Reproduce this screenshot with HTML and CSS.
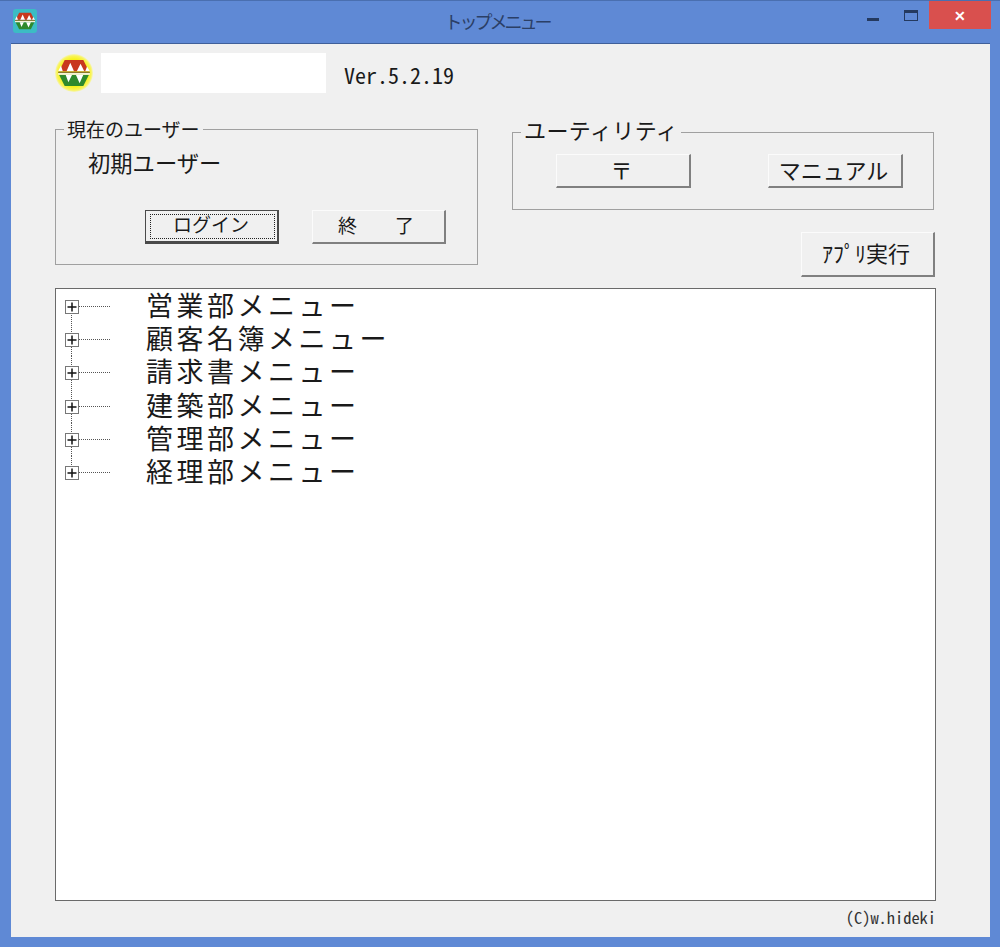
FILE: index.html
```html
<!DOCTYPE html>
<html lang="ja">
<head>
<meta charset="utf-8">
<title>トップメニュー</title>
<link rel="stylesheet" href="styles.css">
</head>
<body>
<svg class="defs" width="0" height="0" aria-hidden="true">
  <defs>
    <radialGradient id="halo">
      <stop offset="0.72" stop-color="#f7f21a"/>
      <stop offset="0.9" stop-color="#f9f45a"/>
      <stop offset="1" stop-color="#f4f4c0"/>
    </radialGradient>
    <symbol id="mark" viewBox="0 0 34 30">
      <path d="M7 1 H27 L33 13 H1 Z" fill="#c8381e"/>
      <path d="M1 17 H33 L27 29 H7 Z" fill="#2f8a2c"/>
      <path d="M9 13 L13 4 L17 13 Z M20 13 L24 5 L28 13 Z M0 13 L3 7 L5 13 Z M29 13 L31 8 L34 13 Z" fill="#fff"/>
      <path d="M8 17 L11 25 L15 17 Z M19 17 L23 26 L27 17 Z" fill="#fff"/>
      <rect x="0" y="13.5" width="34" height="1.5" fill="#8c7a28"/>
      <rect x="0" y="15" width="34" height="2" fill="#f4f2d8"/>
    </symbol>
  </defs>
</svg>
<div class="window">
  <header class="titlebar">
    <div class="app-icon">
      <svg width="20" height="18"><use href="#mark"/></svg>
    </div>
    <div class="title">トップメニュー</div>
    <div class="controls">
      <span class="ctl-min"></span>
      <span class="ctl-max"></span>
      <span class="ctl-close">✕</span>
    </div>
  </header>
  <main class="client">
    <div class="top">
      <svg class="logo" width="38" height="40" viewBox="0 0 38 40">
        <circle cx="19" cy="20" r="19" fill="url(#halo)"/>
        <use href="#mark" x="3" y="6" width="32" height="28"/>
      </svg>
      <div class="namebox"></div>
      <div class="version">Ver.5.2.19</div>
    </div>
    <div class="panels">
      <section class="group group-user">
        <div class="group-title title-user">現在のユーザー</div>
        <div class="user-name">初期ユーザー</div>
        <div class="user-actions">
          <button class="btn btn-small btn-focus"><span class="focus-ring">ログイン</span></button>
          <button class="btn btn-small btn-quit">終　　了</button>
        </div>
      </section>
      <div class="right-col">
        <section class="group group-util">
          <div class="group-title title-util">ユーティリティ</div>
          <div class="util-actions">
            <button class="btn">〒</button>
            <button class="btn">マニュアル</button>
          </div>
        </section>
        <button class="btn btn-run">ｱﾌﾟﾘ実行</button>
      </div>
    </div>
    <div class="tree">
      <div class="row">
        <svg class="node" width="81" height="33"><path class="dots" d="M14 16.5H45M6.5 23V33"/><rect class="box" x="0.5" y="10.5" width="13" height="13"/><path class="plus" d="M2.5 17H11.5M7 12.5V21.5"/></svg>
        <span class="label">営業部メニュー</span>
      </div>
      <div class="row">
        <svg class="node" width="81" height="33"><path class="dots" d="M14 16.5H45M6.5 0V10M6.5 24V33"/><rect class="box" x="0.5" y="10.5" width="13" height="13"/><path class="plus" d="M2.5 17H11.5M7 12.5V21.5"/></svg>
        <span class="label">顧客名簿メニュー</span>
      </div>
      <div class="row">
        <svg class="node" width="81" height="33"><path class="dots" d="M14 16.5H45M6.5 0V10M6.5 24V33"/><rect class="box" x="0.5" y="10.5" width="13" height="13"/><path class="plus" d="M2.5 17H11.5M7 12.5V21.5"/></svg>
        <span class="label">請求書メニュー</span>
      </div>
      <div class="row">
        <svg class="node" width="81" height="33"><path class="dots" d="M14 16.5H45M6.5 0V10M6.5 24V33"/><rect class="box" x="0.5" y="10.5" width="13" height="13"/><path class="plus" d="M2.5 17H11.5M7 12.5V21.5"/></svg>
        <span class="label">建築部メニュー</span>
      </div>
      <div class="row">
        <svg class="node" width="81" height="33"><path class="dots" d="M14 16.5H45M6.5 0V10M6.5 24V33"/><rect class="box" x="0.5" y="10.5" width="13" height="13"/><path class="plus" d="M2.5 17H11.5M7 12.5V21.5"/></svg>
        <span class="label">管理部メニュー</span>
      </div>
      <div class="row">
        <svg class="node" width="81" height="33"><path class="dots" d="M14 16.5H45M6.5 0V10"/><rect class="box" x="0.5" y="10.5" width="13" height="13"/><path class="plus" d="M2.5 17H11.5M7 12.5V21.5"/></svg>
        <span class="label">経理部メニュー</span>
      </div>
    </div>
    <footer class="copyright">(C)w.hideki</footer>
  </main>
</div>
</body>
</html>
```

FILE: styles.css
```css
* {
  box-sizing: border-box;
}

html,
body {
  margin: 0;
  height: 100%;
}

body {
  font-family: "Noto Sans CJK JP", "Liberation Sans", sans-serif;
  color: #1a1a1a;
  overflow: hidden;
}

.defs {
  display: block;
  height: 0;
}

.window {
  width: 1000px;
  height: 947px;
  display: flex;
  flex-direction: column;
  background: #5f89d5;
  border-top: 1px solid #4a6fb0;
  padding: 0 10px 10px 11px;
}

.titlebar {
  height: 42px;
  flex: none;
  display: grid;
  grid-template-columns: 1fr auto 1fr;
  align-items: start;
}

.app-icon {
  width: 24px;
  height: 24px;
  margin: 8px 0 0 2px;
  background: #3cbcc4;
  border-radius: 3px;
  display: flex;
  align-items: center;
  justify-content: center;
}

.title {
  font-size: 18px;
  line-height: 24px;
  letter-spacing: -3px;
  color: #2b3f66;
  margin-top: 8px;
  padding-right: 7px;
}

.controls {
  display: flex;
  justify-content: flex-end;
  align-items: flex-start;
  margin-right: -1px;
}

.ctl-min {
  width: 12px;
  height: 3px;
  margin: 17px 25px 0 0;
  background: #24395f;
}

.ctl-max {
  width: 14px;
  height: 11px;
  margin: 9px 11px 0 0;
  border: 1px solid #24395f;
  border-top-width: 3px;
}

.ctl-close {
  width: 62px;
  height: 28px;
  background: #d9504e;
  color: #fff;
  font-size: 14px;
  line-height: 28px;
  font-weight: 700;
  text-align: center;
}

.client {
  flex: 1;
  min-height: 0;
  display: flex;
  flex-direction: column;
  background: #f0f0f0;
  border-top: 1px solid #3f5f99;
  padding: 9px 54px 0 44px;
}

.top {
  display: flex;
  align-items: flex-start;
  height: 40px;
}

.logo {
  flex: none;
  margin-right: 8px;
}

.namebox {
  width: 225px;
  height: 40px;
  background: #fff;
}

.version {
  font-size: 22px;
  line-height: 28px;
  font-feature-settings: "hwid";
  margin: 7px 0 0 18px;
}

.panels {
  display: grid;
  grid-template-columns: 423px 424px;
  column-gap: 34px;
  margin-top: 36px;
}

.group {
  position: relative;
  border: 1px solid #a0a0a0;
}

.group-title {
  position: absolute;
  background: #f0f0f0;
  white-space: nowrap;
  padding: 0 3px;
}

.title-user {
  top: -13px;
  left: 8px;
  font-size: 19px;
  line-height: 24px;
}

.title-util {
  top: -17px;
  left: 8px;
  font-size: 22px;
  letter-spacing: 0.4px;
  line-height: 26px;
}

.group-user {
  height: 136px;
  padding: 19px 0 0 32px;
}

.user-name {
  font-size: 22.3px;
  line-height: 26px;
}

.user-actions {
  display: flex;
  gap: 33px;
  margin: 35px 0 0 57px;
}

.right-col {
  display: flex;
  flex-direction: column;
  align-items: flex-end;
  padding-top: 3px;
}

.group-util {
  width: 422px;
  height: 78px;
  align-self: flex-start;
  padding: 21px 0 0 43px;
}

.util-actions {
  display: flex;
  gap: 77px;
}

.btn {
  width: 135px;
  height: 34px;
  padding: 0 3px 4px 0;
  font: inherit;
  font-size: 22px;
  line-height: 28px;
  color: #1a1a1a;
  background: #f0f0f0;
  border: 0;
  border-top: 1px solid #fbfbfb;
  border-left: 1px solid #fbfbfb;
  border-right: 2px solid #808080;
  border-bottom: 2px solid #808080;
}

.btn-small {
  font-size: 19px;
  width: 134px;
}

.btn-quit {
  padding-right: 5px;
}

.btn-focus {
  border: 1px solid #4a4a4a;
  border-right-width: 2px;
  border-bottom-width: 3px;
  padding: 3px 2px 2px 4px;
}

.focus-ring {
  display: block;
  height: 100%;
  line-height: 18px;
  padding-right: 3px;
  border: 1px dotted #222;
}

.btn-run {
  width: 134px;
  height: 45px;
  margin-top: 22px;
  margin-right: 1px;
}

.tree {
  height: 613px;
  flex: none;
  margin-top: 11px;
  background: #fff;
  border: 1px solid #6a6a6a;
  padding: 1px 0 0 9px;
}

.row {
  display: flex;
  align-items: center;
  height: 33.2px;
}

.node {
  flex: none;
  display: block;
}

.dots {
  fill: none;
  stroke: #555;
  stroke-width: 1;
  stroke-dasharray: 1 1;
}

.box {
  fill: #fff;
  stroke: #777;
}

.plus {
  fill: none;
  stroke: #111;
  stroke-width: 1.5;
}

.label {
  font-size: 27px;
  line-height: 33px;
  padding-bottom: 4px;
  font-weight: 400;
  letter-spacing: 3.5px;
  white-space: nowrap;
}

.copyright {
  font-size: 16.4px;
  font-feature-settings: "hwid";
  line-height: 18px;
  text-align: right;
  margin-top: 7px;
  color: #333;
}
```
